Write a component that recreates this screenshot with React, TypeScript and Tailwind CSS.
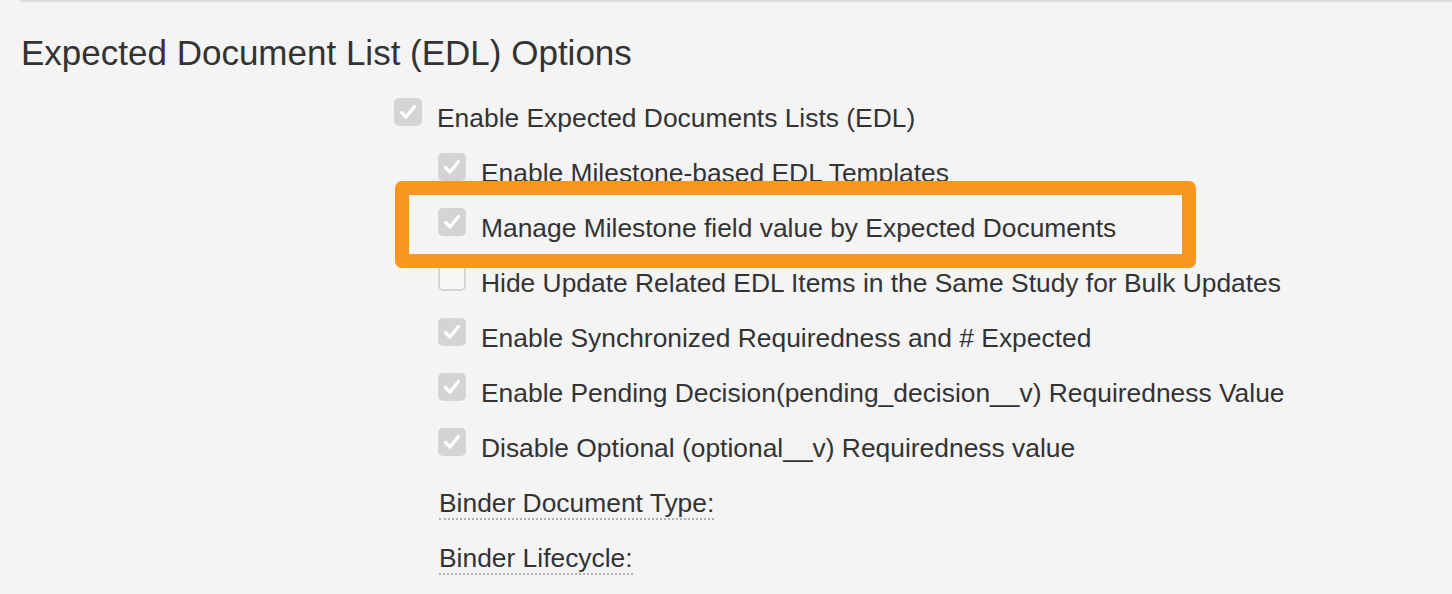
import React from "react";

type Item = { label: string; checked: boolean; nested?: boolean };

const items: Item[] = [
  { label: "Enable Expected Documents Lists (EDL)", checked: true },
  { label: "Enable Milestone-based EDL Templates", checked: true, nested: true },
  { label: "Manage Milestone field value by Expected Documents", checked: true, nested: true },
  { label: "Hide Update Related EDL Items in the Same Study for Bulk Updates", checked: false, nested: true },
  { label: "Enable Synchronized Requiredness and # Expected", checked: true, nested: true },
  { label: "Enable Pending Decision(pending_decision__v) Requiredness Value", checked: true, nested: true },
  { label: "Disable Optional (optional__v) Requiredness value", checked: true, nested: true },
];

function Box({ checked }: { checked: boolean }) {
  if (!checked) {
    return <div className="mt-2 h-[28px] w-[28px] shrink-0 rounded-[5px] border-2 border-[#d4d4d4] bg-[#f7f7f7]" />;
  }
  return (
    <div className="mt-2 flex h-[28px] w-[28px] shrink-0 items-center justify-center rounded-[5px] bg-[#d4d4d4]">
      <svg width="20" height="20" viewBox="0 0 20 20" fill="none">
        <path d="M3.5 10.5 L8 15 L16.5 4.5" stroke="white" strokeWidth="3.2" strokeLinecap="round" strokeLinejoin="round" />
      </svg>
    </div>
  );
}

export default function App() {
  return (
    <div className="relative min-h-screen bg-[#f4f4f4] text-[#333]" style={{ fontFamily: '"Liberation Sans", Arial, sans-serif' }}>
      <div className="ml-[20px] h-[2px] bg-[#dcdcdc]" />
      <h1 className="ml-[21px] mt-[31px] text-[35px] leading-[40px] font-normal">Expected Document List (EDL) Options</h1>
      <div className="ml-[394px] mt-[17px] flex flex-col">
        {items.map((it) => (
          <div key={it.label} className={`flex h-[55px] items-start gap-[15px] ${it.nested ? "ml-[44px]" : ""}`}>
            <Box checked={it.checked} />
            <span className="pt-px text-[26.4px] leading-[55px] whitespace-nowrap">{it.label}</span>
          </div>
        ))}
        {["Binder Document Type:", "Binder Lifecycle:"].map((l) => (
          <div key={l} className="ml-[45px] flex h-[55px] items-start">
            <span className="mt-[13px] border-b-2 border-dotted border-[#b0b0b0] text-[26.4px] leading-[30px] whitespace-nowrap">{l}</span>
          </div>
        ))}
      </div>
      <div className="pointer-events-none absolute left-[395px] top-[181px] h-[87px] w-[801px] rounded-[7px] border-[14px] border-[#f8961e]" />
    </div>
  );
}
